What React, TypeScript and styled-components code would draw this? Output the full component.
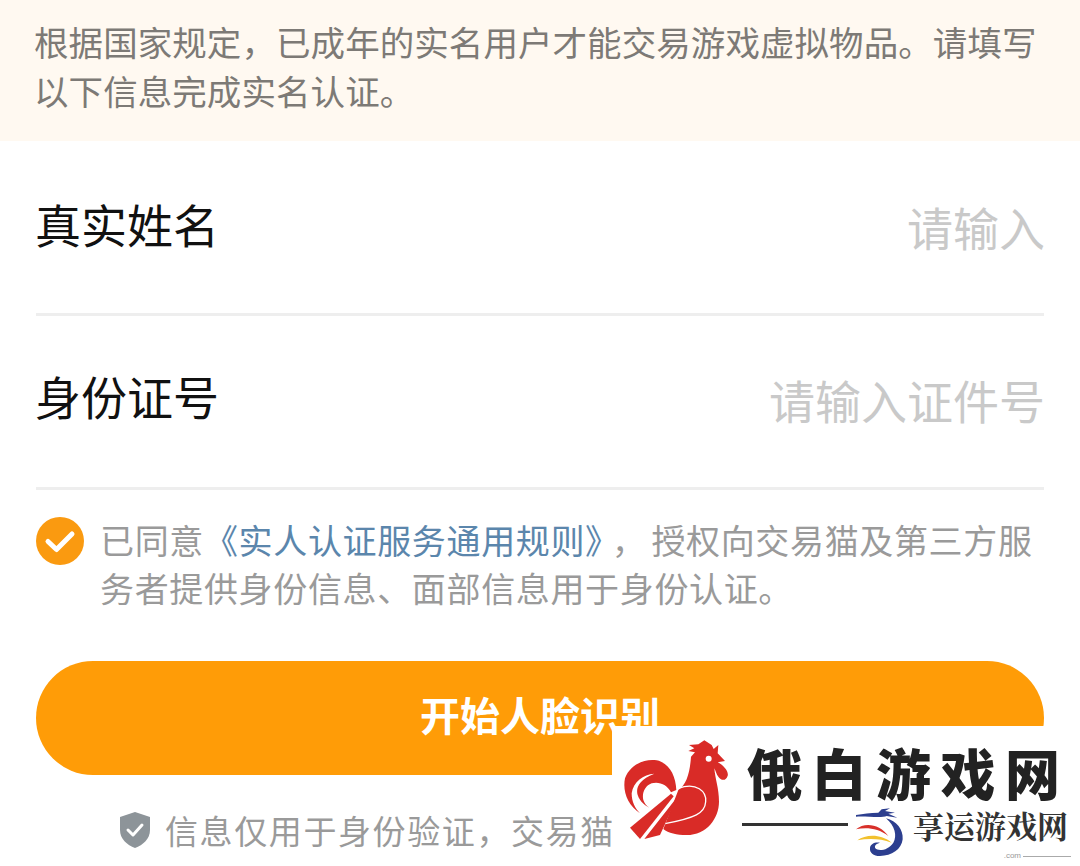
import React from "react";
import styled, { createGlobalStyle } from "styled-components";

const FONT = `"Noto Sans CJK SC", "Noto Sans", sans-serif`;

const Global = createGlobalStyle`
  html, body { margin: 0; padding: 0; background: #fff; }
  body { font-family: ${FONT}; overflow: hidden; }
`;

const Page = styled.div`
  position: relative;
  width: 1080px;
  height: 866px;
  overflow: hidden;
  background: #fff;
`;

const Notice = styled.div`
  box-sizing: border-box;
  height: 141px;
  padding: 17px 0 0 34px;
  background: #fff9f1;
  color: #7d7a76;
  font-size: 34.5px;
  line-height: 49px;
  letter-spacing: 0.07px;
  white-space: nowrap;
`;

const Form = styled.div`
  padding: 0 36px;
`;

const Row = styled.div`
  box-sizing: border-box;
  height: 174px;
  display: flex;
  align-items: center;
  justify-content: space-between;
  border-bottom: 3px solid #eeeeee;
  padding-bottom: 9px;
`;

const FirstRow = styled(Row)`
  height: 175px;
  padding-bottom: 5px;
`;

const Label = styled.span`
  font-size: 46px;
  color: #111;
  margin: -4px 0 0 -1px;
`;

const Placeholder = styled.span`
  font-size: 46px;
  color: #c9c9c9;
  margin: 3px -1px 0 0;
`;

const Agreement = styled.div`
  display: flex;
  gap: 17px;
  margin-top: 26px;
  align-items: flex-start;
`;

const CheckIcon = styled.svg`
  flex: none;
  width: 48px;
  height: 48px;
  margin-top: 1px;
`;

const AgreementText = styled.div`
  width: 945px;
  margin-left: -1px;
  font-size: 34px;
  line-height: 48px;
  letter-spacing: 0.65px;
  color: #9a9a9a;
`;

const LinkText = styled.span`
  color: #5b86ac;
`;

const Comma = styled.span`
  margin: 0 5px 0 9px;
`;

const MainButton = styled.div`
  margin-top: 49px;
  height: 114px;
  box-sizing: border-box;
  padding-bottom: 8px;
  border-radius: 57px;
  background: #ff9c07;
  color: #fff;
  font-size: 40px;
  font-weight: 700;
  display: flex;
  align-items: center;
  justify-content: center;
`;

const Privacy = styled.div`
  margin-top: 31px;
  padding-left: 84px;
  display: flex;
  align-items: center;
  gap: 15px;
  font-size: 33px;
  line-height: 48px;
  letter-spacing: 1.6px;
  color: #9a9a9a;
  white-space: nowrap;
`;

const Watermark = styled.div`
  position: absolute;
  left: 612px;
  top: 726px;
  width: 468px;
  height: 140px;
  background: #fff;
  display: flex;
  gap: 7px;
  padding: 9px 0 0 3px;
  box-sizing: border-box;
`;

const Rooster = styled.svg`
  flex: none;
  width: 120px;
  height: 110px;
`;

const BrandColumn = styled.div`
  display: flex;
  flex-direction: column;
  width: 338px;
`;

const BrandTitle = styled.div`
  font-weight: 900;
  font-size: 55px;
  line-height: 72px;
  letter-spacing: 9.5px;
  color: #222;
  white-space: nowrap;
  margin: 0 0 -1px 5px;
`;

const BrandSub = styled.div`
  display: flex;
  align-items: flex-start;
  margin-top: -5px;
`;

const BrandLine = styled.div`
  width: 106px;
  height: 3px;
  margin-top: 22px;
  background: #333;
  flex: none;
`;

const Dragon = styled.svg`
  flex: none;
  width: 60px;
  height: 60px;
  margin-left: 2px;
`;

const SubTitle = styled.span`
  font-family: "Noto Serif CJK SC", "Noto Sans CJK SC", serif;
  font-weight: 700;
  font-size: 31px;
  line-height: 40px;
  color: #333;
  white-space: nowrap;
  margin: 4px 0 0 3px;
`;

const ComMark = styled.div`
  position: absolute;
  right: 9px;
  bottom: 6px;
  display: flex;
  align-items: center;
  gap: 2px;
  font-family: "Liberation Sans", sans-serif;
  font-size: 8px;
  line-height: 8px;
  color: #999;
`;

const ComLine = styled.div`
  width: 48px;
  height: 1px;
  background: #aaa;
`;

export default function App() {
  return (
    <Page>
      <Global />
      <Notice>
        根据国家规定，已成年的实名用户才能交易游戏虚拟物品。请填写
        <br />
        以下信息完成实名认证。
      </Notice>
      <Form>
        <FirstRow>
          <Label>真实姓名</Label>
          <Placeholder>请输入</Placeholder>
        </FirstRow>
        <Row>
          <Label>身份证号</Label>
          <Placeholder>请输入证件号</Placeholder>
        </Row>
        <Agreement>
          <CheckIcon viewBox="0 0 48 48">
            <circle cx="24" cy="24" r="24" fill="#fa9a10" />
            <path d="M12 24.5l8.5 8L36 17" fill="none" stroke="#fff" strokeWidth="5" strokeLinecap="round" strokeLinejoin="round" />
          </CheckIcon>
          <AgreementText>
            已同意<LinkText>《实人认证服务通用规则》</LinkText>
            <Comma>，</Comma>授权向交易猫及第三方服务者提供身份信息、面部信息用于身份认证。
          </AgreementText>
        </Agreement>
        <MainButton>开始人脸识别</MainButton>
        <Privacy>
          <svg width="30" height="36" viewBox="0 0 30 36">
            <path d="M15 0l15 5v13c0 9-7 15-15 18C7 33 0 27 0 18V5z" fill="#8d9499" />
            <path d="M8 18l5 5 9-10" fill="none" stroke="#fff" strokeWidth="3" strokeLinecap="round" strokeLinejoin="round" />
          </svg>
          信息仅用于身份验证，交易猫不会泄露您的信息
        </Privacy>
      </Form>
      <Watermark>
        <Rooster viewBox="0 0 360 330">
          <path
            d="M228 65L240 52L220 48L238 40L222 30L250 28L268 16L290 30L296 42L310 30L308 55L330 78L308 82C325 90 342 110 338 122C334 138 318 138 310 125C304 118 302 108 298 100C300 130 312 160 312 200C312 250 275 300 215 300C185 300 160 295 145 282L190 165C215 150 225 110 228 65Z"
            fill="#d92b27"
          />
          <circle cx="281" cy="71" r="9" fill="#fff" />
          <path d="M190 160C245 140 275 170 272 200C270 235 240 248 150 266" fill="none" stroke="#fff" strokeWidth="4" />
          <path
            d="M75 235C38 210 22 170 30 130C44 90 88 70 125 76C162 84 182 120 184 165L168 172C158 150 132 138 110 145C90 152 80 175 85 195C88 205 95 213 103 218C90 212 75 200 68 180C62 160 70 135 118 116C85 118 55 140 50 175C50 200 60 220 75 235Z"
            fill="#d92b27"
          />
          <path d="M45 278L168 176L176 184L75 312Z" fill="#d92b27" />
          <path d="M88 312L182 192L190 180L135 300Z" fill="#d92b27" />
        </Rooster>
        <BrandColumn>
          <BrandTitle>俄白游戏网</BrandTitle>
          <BrandSub>
            <BrandLine />
            <Dragon viewBox="0 0 180 180">
              <path d="M18 42C40 38 60 35 85 35L95 25L120 22L105 30L135 35L115 38L142 50L110 45C95 52 50 45 18 47Z" fill="#2c3e8f" />
              <path d="M18 85C45 62 90 70 115 105C85 82 50 78 18 85Z" fill="#d8302a" />
              <path d="M22 118C50 98 95 100 125 125C90 112 55 112 22 118Z" fill="#f2c12e" />
              <path d="M108 52C140 60 160 85 158 115C155 145 125 165 90 165C70 165 58 155 60 140C62 128 75 122 90 125C78 128 72 135 76 142C85 152 115 148 130 125C142 105 135 75 108 52Z" fill="#2c3e8f" />
            </Dragon>
            <SubTitle>享运游戏网</SubTitle>
          </BrandSub>
        </BrandColumn>
        <ComMark>
          .com
          <ComLine />
        </ComMark>
      </Watermark>
    </Page>
  );
}
